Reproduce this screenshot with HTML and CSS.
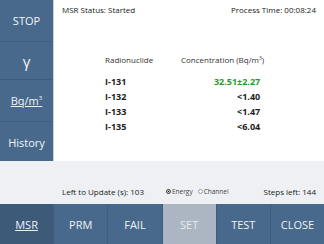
FILE: index.html
```html
<!DOCTYPE html>
<html lang="en">
<head>
    <meta charset="UTF-8">
    <title>MSR</title>
    <link rel="stylesheet" href="styles.css">
</head>
<body>
    <div class="screen">
        <div class="top">
            <div class="sidebar">
                <div class="side-btn stop">STOP</div>
                <div class="side-btn gamma">γ</div>
                <div class="side-btn unit"><u>Bq/m<sup>3</sup></u></div>
                <div class="side-btn last">History</div>
            </div>
            <div class="main">
                <div class="header">
                    <span>MSR Status: Started</span>
                    <span>Process Time: 00:08:24</span>
                </div>
                <table class="results">
                    <tr class="head"><td>Radionuclide</td><td>Concentration (Bq/m<sup>3</sup>)</td></tr>
                    <tr><td>I-131</td><td class="val green">32.51±2.27</td></tr>
                    <tr><td>I-132</td><td class="val">&lt;1.40</td></tr>
                    <tr><td>I-133</td><td class="val">&lt;1.47</td></tr>
                    <tr><td>I-135</td><td class="val">&lt;6.04</td></tr>
                </table>
            </div>
        </div>
        <div class="status">
            <span>Left to Update (s): 103</span>
            <span class="radios">
                <span class="radio on"></span>Energy
                <span class="radio"></span>Channel
            </span>
            <span class="steps">Steps left: 144</span>
        </div>
        <div class="bottom">
            <div class="bot-btn active"><u>MSR</u></div>
            <div class="bot-btn">PRM</div>
            <div class="bot-btn">FAIL</div>
            <div class="bot-btn disabled">SET</div>
            <div class="bot-btn">TEST</div>
            <div class="bot-btn">CLOSE</div>
        </div>
    </div>
</body>
</html>
```

FILE: styles.css
```css
body {
    margin: 0;
    font-family: 'Open Sans', 'Noto Sans', Arial, sans-serif;
    color: #222;
}
.screen {
    width: 324px;
    height: 244px;
    background-color: #eef0f4;
    overflow: hidden;
}
.top {
    display: flex;
    height: 161px;
}
.sidebar {
    width: 53px;
    display: flex;
    flex-direction: column;
    background-color: #48698c;
    border-right: 1px solid #c9d2dc;
}
.side-btn {
    height: 40px;
    display: flex;
    align-items: center;
    justify-content: center;
    color: #f2f5f8;
    font-size: 11px;
    border-bottom: 1px solid #3f5e7f;
    box-sizing: border-box;
}
.side-btn.stop { height: 42px; }
.side-btn.gamma { height: 38px; font-size: 15px; }
.side-btn.unit { height: 42px; }
.side-btn.last { height: 39px; border-bottom: none; padding-top: 2px; }
.side-btn sup { font-size: 6px; }
.main {
    flex: 1;
    background-color: white;
    padding: 4px 8px 0 8px;
}
.header {
    display: flex;
    justify-content: space-between;
    font-size: 8px;
}
.results {
    margin: 39px 0 0 43px;
    border-collapse: collapse;
    font-size: 8px;
}
.results td {
    padding: 0;
    height: 15px;
    line-height: 15px;
}
.results td:first-child {
    width: 76px;
    font-weight: bold;
    font-size: 9px;
}
.results .head td {
    font-weight: normal;
    font-size: 8px;
    color: #333;
    height: 20px;
    vertical-align: top;
    line-height: 12px;
}
.results sup {
    font-size: 5px;
    line-height: 0;
    vertical-align: 3px;
}
.val {
    text-align: right;
    font-weight: bold;
    font-size: 9px;
    padding-right: 4px !important;
}
.green { color: #2e9a2e; }
.status {
    height: 43px;
    display: flex;
    align-items: center;
    padding: 18px 8px 0 62px;
    font-size: 8px;
    box-sizing: border-box;
}
.radios {
    margin-left: 17px;
    font-size: 6.5px;
    color: #444;
    display: flex;
    align-items: center;
}
.radio {
    display: inline-block;
    width: 5px;
    height: 5px;
    border: 1px solid #999;
    border-radius: 50%;
    margin: 0 1px 0 5px;
    background-color: white;
    box-sizing: border-box;
}
.radio.on {
    border-color: #333;
    background: radial-gradient(circle, #222 40%, white 50%);
}
.steps { margin-left: auto; }
.bottom {
    display: flex;
    height: 40px;
}
.bot-btn {
    flex: 1;
    display: flex;
    align-items: center;
    justify-content: center;
    background-color: #48698c;
    color: #eef2f6;
    font-size: 11px;
    border-right: 1px solid #3f5e7f;
}
.bot-btn:last-child { border-right: none; }
.bot-btn.active { background-color: #3d5a79; }
.bot-btn.disabled { background-color: #abb6c2; color: #e6eaee; }
```
